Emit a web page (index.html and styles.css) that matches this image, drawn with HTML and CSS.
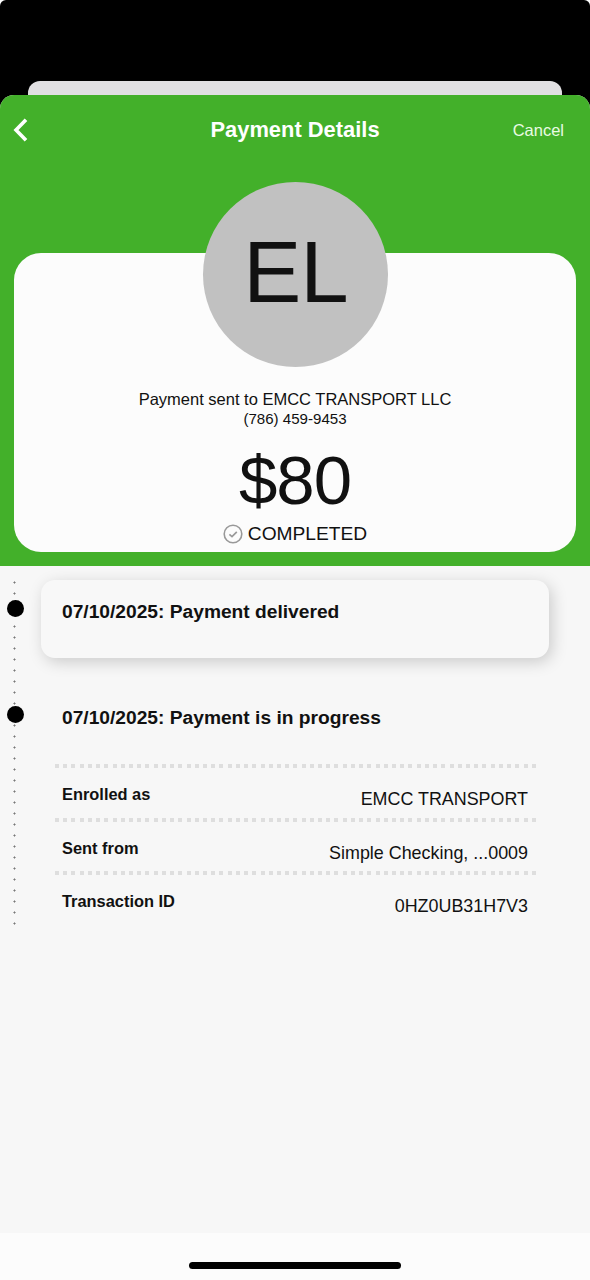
FILE: index.html
```html
<!DOCTYPE html>
<html lang="en">
<head>
    <meta charset="UTF-8">
    <meta name="viewport" content="width=device-width, initial-scale=1.0">
    <title>Payment Details</title>
    <link rel="stylesheet" href="styles.css">
</head>
<body>
    <div class="screen">
        <div class="back-sheet"></div>
        <main class="sheet">
            <section class="hero">
                <header class="navbar">
                    <svg class="back" viewBox="0 0 16 24"><path d="M13 1.7 L3 12 L13 22.3" fill="none" stroke="#fff" stroke-width="3.6"/></svg>
                    <h1>Payment Details</h1>
                    <span class="cancel">Cancel</span>
                </header>
                <div class="summary">
                    <div class="avatar">EL</div>
                    <p class="recipient">Payment sent to EMCC TRANSPORT LLC</p>
                    <p class="phone">(786) 459-9453</p>
                    <p class="amount">$80</p>
                    <p class="status">
                        <svg class="check" viewBox="0 0 20 20" fill="none" stroke="#999"><circle cx="10" cy="10" r="8.8" stroke-width="1.6"/><path d="M6.4 10.4 L9 12.7 L13.8 7.9" stroke-width="1.7"/></svg>
                        <span>COMPLETED</span>
                    </p>
                </div>
            </section>

            <section class="timeline">
                <div class="rail"></div>
                <div class="event">
                    <span class="bullet"></span>
                    <div class="event-box raised">07/10/2025: Payment delivered</div>
                </div>
                <div class="event">
                    <span class="bullet"></span>
                    <div class="event-box">07/10/2025: Payment is in progress</div>
                </div>
                <dl class="details">
                    <div class="row"><dt>Enrolled as</dt><dd>EMCC TRANSPORT</dd></div>
                    <div class="row"><dt>Sent from</dt><dd>Simple Checking, ...0009</dd></div>
                    <div class="row"><dt>Transaction ID</dt><dd>0HZ0UB31H7V3</dd></div>
                </dl>
            </section>

            <footer class="home"><div class="home-bar"></div></footer>
        </main>
    </div>
</body>
</html>
```
FILE: styles.css
```css
* { box-sizing: border-box; }
body {
    margin: 0;
    background: #fff;
    font-family: "Liberation Sans", Arial, sans-serif;
    color: #111;
}
h1, p, dl, dd { margin: 0; }
.screen {
    width: 590px;
    height: 1280px;
    padding-top: 81px;
    display: flex;
    flex-direction: column;
    overflow: hidden;
    background: #000;
    border-radius: 6px 6px 0 0;
}
.back-sheet {
    height: 14px;
    flex: none;
    margin: 0 28px;
    background: #e1e0e2;
    border-radius: 12px 12px 0 0;
}
.sheet {
    flex: 1;
    display: flex;
    flex-direction: column;
    background: #f7f7f7;
    border-radius: 14px 14px 0 0;
    overflow: hidden;
}

/* header */
.hero {
    height: 471px;
    flex: none;
    padding: 0 14px;
    background: #43b02a;
}
.navbar {
    height: 158px;
    padding: 23px 12px 0 0;
    display: grid;
    grid-template-columns: 80px 1fr 68px;
    align-items: start;
    color: #fff;
}
.back {
    width: 16px;
    height: 24px;
    margin-left: -1px;
}
.navbar h1 {
    font-size: 21.9px;
    line-height: 24px;
    text-align: center;
}
.cancel {
    font-size: 16.5px;
    line-height: 25px;
    text-align: right;
    color: #e9fbe3;
}

/* summary card */
.summary {
    height: 299px;
    display: flex;
    flex-direction: column;
    align-items: center;
    background: #fcfcfc;
    border-radius: 27px;
}
.avatar {
    width: 185px;
    height: 185px;
    flex: none;
    margin: -71.5px 0 0 1px;
    border-radius: 50%;
    background: #c1c1c1;
    font-size: 87px;
    line-height: 180px;
    letter-spacing: -1px;
    text-align: center;
}
.recipient {
    margin-top: 22.5px;
    font-size: 16.5px;
    line-height: 20px;
}
.phone {
    font-size: 15.1px;
    line-height: 20px;
}
.amount {
    margin-top: 15px;
    font-size: 69px;
    line-height: 74px;
    letter-spacing: -1px;
}
.status {
    display: flex;
    align-items: center;
    gap: 5px;
    margin-top: 4px;
    font-size: 19.2px;
    line-height: 24px;
}
.check {
    width: 20px;
    height: 20px;
}

/* timeline */
.timeline {
    flex: 1;
    position: relative;
    padding: 14px 41px 0 7px;
}
.rail {
    position: absolute;
    left: 13px;
    top: 11px;
    width: 3px;
    height: 352px;
    background: radial-gradient(circle, #777 0.7px, transparent 1.4px) 0 0 / 3px 11px;
}
.event {
    position: relative;
    display: flex;
    height: 106px;
    align-items: flex-start;
}
.bullet {
    width: 17px;
    height: 17px;
    flex: none;
    margin: 20px 17px 0 0;
    border-radius: 50%;
    background: #000;
}
.event-box {
    flex: 1;
    height: 78px;
    padding: 20px 21px;
    font-size: 19.2px;
    font-weight: bold;
    line-height: 24px;
}
.raised {
    border-radius: 14px;
    background: #f8f8f8;
    box-shadow: 3px 4px 16px rgba(0, 0, 0, 0.18);
}
.details {
    margin: -28px 13px 0 48px;
}
.row {
    display: flex;
    justify-content: space-between;
    height: 53.5px;
    padding: 20px 8px 0 7px;
    background: repeating-linear-gradient(90deg, #dedede 0 4px, transparent 4px 8.22px) 0 0 / 100% 4px no-repeat;
}
.row dt {
    font-size: 16.4px;
    font-weight: bold;
    line-height: 20px;
}
.row dd {
    padding-top: 5px;
    font-size: 17.9px;
    line-height: 20px;
}

.home {
    height: 47px;
    display: flex;
    justify-content: center;
    padding-top: 29px;
    background: #fcfcfc;
}
.home-bar {
    width: 212px;
    height: 7px;
    border-radius: 4px;
    background: #000;
}
```
